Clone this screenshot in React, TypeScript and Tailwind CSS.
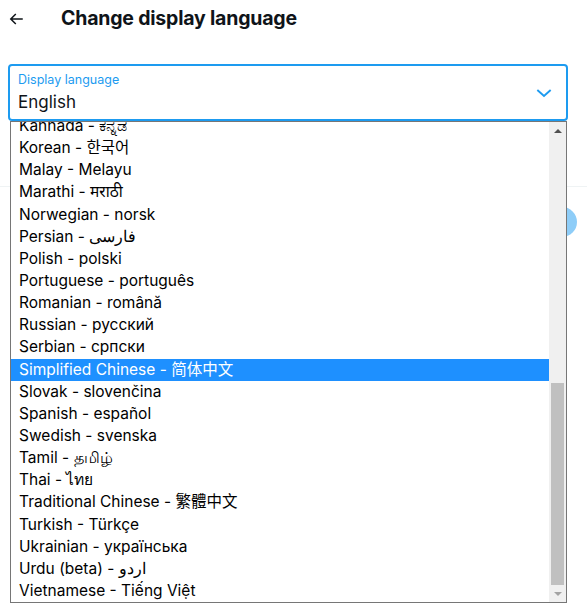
import React from "react";

const languages = [
  "Kannada - ಕನ್ನಡ",
  "Korean - 한국어",
  "Malay - Melayu",
  "Marathi - मराठी",
  "Norwegian - norsk",
  "Persian - فارسی",
  "Polish - polski",
  "Portuguese - português",
  "Romanian - română",
  "Russian - русский",
  "Serbian - српски",
  "Simplified Chinese - 简体中文",
  "Slovak - slovenčina",
  "Spanish - español",
  "Swedish - svenska",
  "Tamil - தமிழ்",
  "Thai - ไทย",
  "Traditional Chinese - 繁體中文",
  "Turkish - Türkçe",
  "Ukrainian - українська",
  "Urdu (beta) - اردو",
  "Vietnamese - Tiếng Việt",
];

const selected = "Simplified Chinese - 简体中文";

export default function App() {
  return (
    <div
      className="relative w-[587px] h-[616px] bg-white overflow-hidden text-[#0f1419]"
      style={{ fontFamily: 'Inter, "Noto Sans", "Noto Sans CJK SC", sans-serif' }}
    >
      {/* Header */}
      <header className="flex items-center h-[37px] pl-[7px]">
        <svg viewBox="0 0 24 24" className="w-[18px] h-[18px]" fill="currentColor">
          <path d="M7.414 13l5.043 5.04-1.414 1.42L3.586 12l7.457-7.46 1.414 1.42L7.414 11H21v2H7.414z" />
        </svg>
        <h2 className="ml-[36px] text-[19.5px] font-bold tracking-[-0.2px]">Change display language</h2>
      </header>

      {/* Select field */}
      <div className="mt-[27px] ml-2 w-[560px] h-[57px] border-2 border-[#1d9bf0] rounded-[4px] flex items-center justify-between pl-[8px] pr-[12px]">
        <div className="flex flex-col">
          <span className="text-[12.5px] text-[#1d9bf0] leading-[16px] mt-[-1px]">Display language</span>
          <span className="text-[17px] leading-[22px] mt-[3px]">English</span>
        </div>
        <svg viewBox="0 0 24 24" className="w-[20px] h-[20px] mb-[-1px]" fill="none" stroke="#1d9bf0" strokeWidth="2.3">
          <path d="M4 8.5l8 7 8-7" />
        </svg>
      </div>

      {/* Content underneath the open list */}
      <div className="mt-[65px] border-t border-[#eff3f4]" />
      <div className="flex justify-end pr-[10px] mt-[20px]">
        <button className="h-[30px] w-[70px] rounded-full bg-[#8ecdf8]" />
      </div>

      {/* Open dropdown list */}
      <div className="absolute left-[10px] top-[121px] w-[557px] h-[482px] border border-[#767676] bg-white flex overflow-hidden">
        <div className="flex-1 overflow-hidden">
          <ul className="mt-[-7px]">
            {languages.map((l) => (
              <li
                key={l}
                className={
                  "h-[22.15px] leading-[22px] pl-[8px] text-[15.5px] whitespace-nowrap " +
                  (l === selected ? "bg-[#1e90ff] text-white" : "text-black")
                }
              >
                {l}
              </li>
            ))}
          </ul>
        </div>
        <div className="w-[17px] bg-[#f0f0f0] flex flex-col items-center">
          <div className="h-[17px] flex items-center justify-center">
            <div className="w-0 h-0 border-l-[4px] border-r-[4px] border-b-[4px] border-l-transparent border-r-transparent border-b-[#505050]" />
          </div>
          <div className="mt-[244px] w-[13px] flex-1 bg-[#c0c0c0]" />
          <div className="h-[17px] flex items-center justify-center">
            <div className="w-0 h-0 border-l-[4px] border-r-[4px] border-t-[4px] border-l-transparent border-r-transparent border-t-[#a3a3a3]" />
          </div>
        </div>
      </div>
    </div>
  );
}
